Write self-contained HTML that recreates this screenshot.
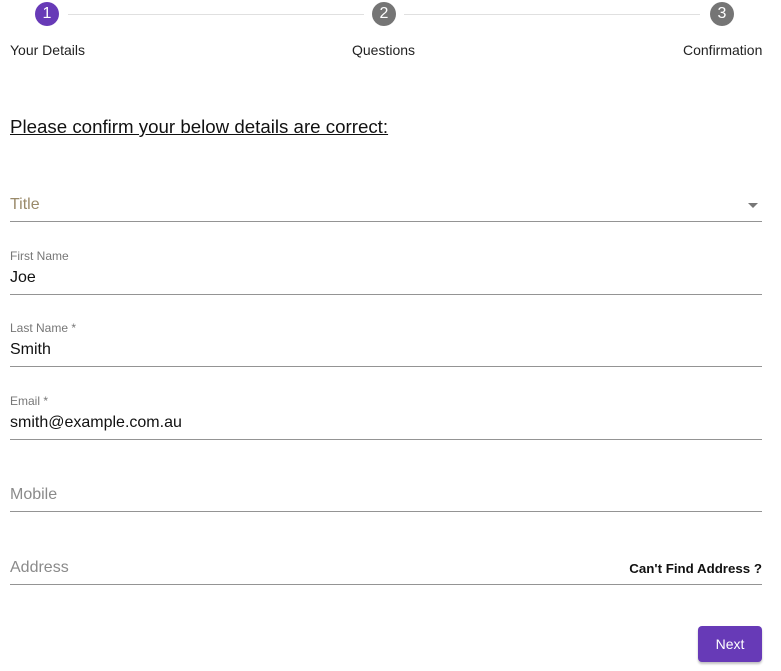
<!DOCTYPE html>
<html><head><style>
body{margin:0;width:781px;height:671px;background:#fff;font-family:"Liberation Sans",sans-serif;position:relative;overflow:hidden;color:#000}
.a{position:absolute}
.c{position:absolute;width:24px;height:24px;border-radius:50%;color:#fff;font-size:16px;text-align:center;line-height:24px;top:2px}
.ln{position:absolute;top:14px;height:1px;background:#e0e0e0}
.lb{position:absolute;top:42px;font-size:14px;color:#222}
.u{position:absolute;left:10px;width:752px;height:1px;background:#949494}
.ph{position:absolute;left:10px;font-size:16px;color:#8a8a8a}
.sl{position:absolute;left:10px;font-size:12px;color:#777}
.v{position:absolute;left:10px;font-size:16px;color:#111}
</style></head><body>
<div class="c" style="left:35px;background:#673ab7">1</div>
<div class="c" style="left:372px;background:#757575">2</div>
<div class="c" style="left:710px;background:#757575">3</div>
<div class="ln" style="left:68px;width:296px"></div>
<div class="ln" style="left:404px;width:296px"></div>
<div class="lb" style="left:10px">Your Details</div>
<div class="lb" style="left:352px">Questions</div>
<div class="lb" style="left:683px">Confirmation</div>
<div class="a" style="left:10px;top:116px;font-size:18.7px;text-decoration:underline;color:#111">Please confirm your below details are correct:</div>

<div class="ph" style="top:196px;color:#9a8a6a">Title</div>
<div class="a" style="left:748px;top:203px;width:0;height:0;border-left:5px solid transparent;border-right:5px solid transparent;border-top:5px solid #777"></div>
<div class="u" style="top:221px"></div>

<div class="sl" style="top:249px">First Name</div>
<div class="v" style="top:269px">Joe</div>
<div class="u" style="top:294px"></div>

<div class="sl" style="top:321px">Last Name *</div>
<div class="v" style="top:341px">Smith</div>
<div class="u" style="top:366px"></div>

<div class="sl" style="top:394px">Email *</div>
<div class="v" style="top:414px">smith@example.com.au</div>
<div class="u" style="top:439px"></div>

<div class="ph" style="top:486px">Mobile</div>
<div class="u" style="top:511px"></div>

<div class="ph" style="top:559px">Address</div>
<div class="a" style="right:19px;top:561px;font-size:13.3px;font-weight:bold;color:#111">Can't Find Address ?</div>
<div class="u" style="top:584px"></div>

<div class="a" style="left:698px;top:626px;width:64px;height:36px;background:#673ab7;border-radius:4px;color:#fff;font-size:14px;text-align:center;line-height:36px;box-shadow:0 2px 2px rgba(0,0,0,.25)">Next</div>
</body></html>
